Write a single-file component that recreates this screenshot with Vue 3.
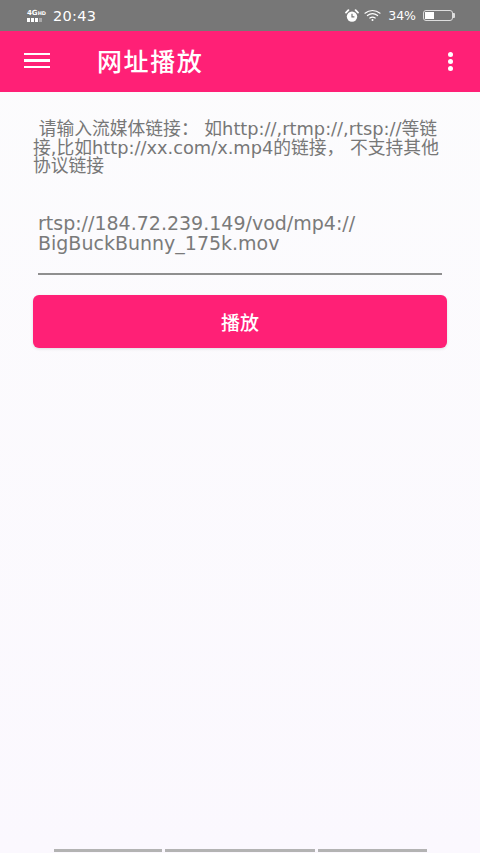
<template>
  <div class="page">
    <div class="status-bar">
      <div class="status-left">
        <div class="signal">
          <span class="net">4G<small>HD</small></span>
          <span class="bars"><i></i><i></i><i></i><i class="dim"></i></span>
        </div>
        <span class="time">20:43</span>
      </div>
      <div class="status-right">
        <svg class="alarm" width="14" height="14" viewBox="0 0 14 14">
          <circle cx="7" cy="7.6" r="5.2" fill="#fff" />
          <path d="M7 4.8V7.8H9.4" fill="none" stroke="#777" stroke-width="1.2" />
          <path d="M1 3.6 3.4 1.2M13 3.6 10.6 1.2" stroke="#fff" stroke-width="1.8" stroke-linecap="round" />
        </svg>
        <svg class="wifi" width="17" height="13" viewBox="0 0 17 13" fill="none" stroke="#fff" stroke-linecap="round">
          <path d="M1 4.2C5.4.6 11.6.6 16 4.2" stroke-width="1.2" />
          <path d="M3.4 6.6C6.4 4.3 10.6 4.3 13.6 6.6" stroke-width="1.2" />
          <path d="M5.8 9C7.4 7.9 9.6 7.9 11.2 9" stroke-width="1.2" />
          <circle cx="8.5" cy="11" r="1" fill="#fff" stroke="none" />
        </svg>
        <span class="percent">34%</span>
        <div class="battery">
          <div class="level" :style="{ width: battery + '%' }"></div>
          <span class="tip"></span>
        </div>
      </div>
    </div>

    <header class="toolbar">
      <button class="icon-btn menu" aria-label="menu">
        <span></span><span></span><span></span>
      </button>
      <h1 class="title">网址播放</h1>
      <button class="icon-btn more" aria-label="more">
        <span></span><span></span><span></span>
      </button>
    </header>

    <main class="content">
      <p class="hint">&nbsp;请输入流媒体链接： 如http://,rtmp://,rtsp://等链接,比如http://xx.com/x.mp4的链接， 不支持其他协议链接</p>
      <div class="url-field">
        <div class="url-text">rtsp://184.72.239.149/vod/mp4://<br />BigBuckBunny_175k.mov</div>
      </div>
      <button class="play-btn">播放</button>
    </main>

    <div class="bottom-lines">
      <span class="line first"></span>
      <span class="line second"></span>
      <span class="line third"></span>
    </div>
  </div>
</template>

<script setup>
const battery = 34
</script>

<style>
html, body {
  margin: 0;
  padding: 0;
}
</style>

<style scoped>
.page {
  width: 480px;
  height: 853px;
  display: flex;
  flex-direction: column;
  overflow: hidden;
  background: linear-gradient(#fcfcfd, #fbf8fe);
  font-family: "DejaVu Sans", "Noto Sans CJK SC", sans-serif;
}

.status-bar {
  height: 31px;
  flex: none;
  display: flex;
  justify-content: space-between;
  align-items: center;
  padding: 0 27px;
  box-sizing: border-box;
  background: #777;
  color: #fff;
}

.status-left,
.status-right {
  display: flex;
  align-items: center;
}

.signal {
  width: 21px;
  margin-right: 5px;
  display: flex;
  flex-direction: column;
  gap: 1px;
}

.net {
  font-size: 7px;
  line-height: 7px;
  font-weight: 700;
  white-space: nowrap;
}

.net small {
  font-size: 5px;
}

.bars {
  display: flex;
  gap: 1px;
}

.bars i {
  width: 3px;
  height: 4px;
  background: #fff;
}

.bars i.dim {
  background: #aaa;
}

.time {
  font-size: 14.5px;
  letter-spacing: 0.3px;
}

.alarm {
  margin-right: 5px;
}

.wifi {
  margin-right: 7px;
}

.percent {
  font-size: 12.5px;
  margin-right: 7px;
}

.battery {
  position: relative;
  width: 30px;
  height: 11px;
  box-sizing: border-box;
  border: 1px solid #ddd;
  border-radius: 3px;
  padding: 1px;
}

.level {
  height: 100%;
  background: #fff;
}

.tip {
  position: absolute;
  right: -3px;
  top: 2px;
  width: 2px;
  height: 5px;
  background: #ddd;
  border-radius: 0 1px 1px 0;
}

.toolbar {
  height: 61px;
  flex: none;
  display: flex;
  align-items: center;
  padding: 0 24px;
  box-sizing: border-box;
  background: #ff2076;
  color: #fff;
}

.icon-btn {
  border: 0;
  padding: 0;
  background: none;
  display: flex;
  flex-direction: column;
}

.menu {
  width: 26px;
  gap: 4px;
  margin-bottom: 2px;
}

.menu span {
  height: 2.5px;
  background: #fff;
}

.more {
  margin-left: auto;
  margin-right: 3px;
  gap: 2px;
}

.more span {
  width: 5px;
  height: 5px;
  border-radius: 50%;
  background: #fff;
}

.title {
  margin: 0 0 3px 47px;
  font-size: 25px;
  font-weight: 500;
  letter-spacing: 1.6px;
}

.content {
  padding: 0 33px;
  flex: 1;
}

.hint {
  margin: 28px 0 0;
  padding-right: 4px;
  font-size: 17.8px;
  line-height: 18.5px;
  color: #777;
  word-break: break-all;
}

.url-field {
  margin: 37px 5px 0;
  padding: 0 0 20px;
  border-bottom: 2px solid #8f8f8f;
}

.url-text {
  font-size: 19px;
  line-height: 20px;
  color: #7a7a7a;
}

.play-btn {
  display: block;
  width: 414px;
  height: 53px;
  margin-top: 20px;
  border: 0;
  border-radius: 6px;
  background: #ff2076;
  color: #fff;
  font: 500 19px "DejaVu Sans", "Noto Sans CJK SC", sans-serif;
  box-shadow: 0 1px 3px rgba(0, 0, 0, 0.12);
}

.bottom-lines {
  flex: none;
  height: 4px;
  display: flex;
  gap: 3px;
  padding-left: 54px;
}

.line {
  height: 3px;
  background: #b3b3b3;
}

.first {
  width: 108px;
}

.second {
  width: 150px;
}

.third {
  width: 109px;
}
</style>
